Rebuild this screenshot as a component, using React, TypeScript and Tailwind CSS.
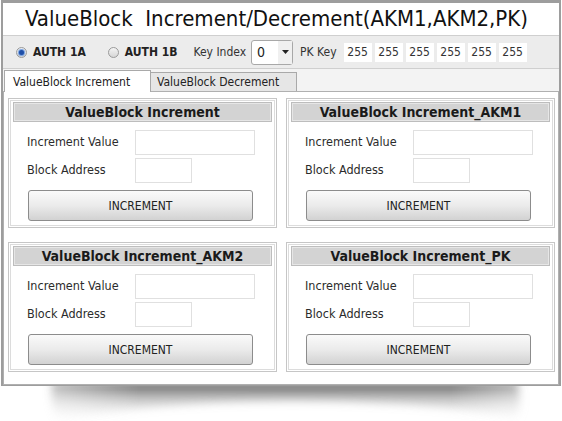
const font = "font-['DejaVu_Sans_Condensed','DejaVu_Sans',sans-serif]";

const Radio = ({ checked }: { checked?: boolean }) => (
  <span className="w-[11px] h-[11px] rounded-full border border-[#9a9a9a] bg-gradient-to-b from-[#f4f4f4] to-[#d6d6d6] flex items-center justify-center shrink-0">
    {checked && <span className="w-[5px] h-[5px] rounded-full bg-[#1f4fa8] shadow-[0_0_1px_1px_#6d9be0]" />}
  </span>
);

const GroupBox = ({ title }: { title: string }) => (
  <div className="w-[269px] h-[130px] border border-[#c6c6c6] shadow-[inset_0_0_0_1px_#fff,inset_0_0_0_2px_#dcdcdc] bg-white px-[4px] pt-[3px]">
    <div className="h-[20px] bg-[#d3d3d3] border border-[#bdbdbd] shadow-[inset_0_0_0_1px_#e6e6e6] flex items-center justify-center text-[14px] font-bold text-[#1a1a1a]">
      {title}
    </div>
    <div className="mt-[8px] flex items-center pl-[14px]">
      <span className="w-[108px] text-[12.5px] text-[#2b2b2b]">Increment Value</span>
      <div className="w-[120px] h-[25px] border border-[#e0e0e0] bg-white" />
    </div>
    <div className="mt-[3px] flex items-center pl-[14px]">
      <span className="w-[108px] text-[12.5px] text-[#2b2b2b]">Block Address</span>
      <div className="w-[57px] h-[25px] border border-[#e0e0e0] bg-white" />
    </div>
    <button className="mt-[7px] ml-[15px] w-[225px] h-[31px] rounded-[3px] border border-[#8c8c8c] bg-gradient-to-b from-[#fafafa] via-[#ebebeb] to-[#d2d2d2] text-[12px] text-[#222] flex items-center justify-center">
      INCREMENT
    </button>
  </div>
);

export default function App() {
  return (
    <div className={`w-[562px] h-[421px] bg-white overflow-hidden ${font}`}>
      <div className="ml-[1px] w-[560px] border-t-[3px] border-l-[2px] border-r-[2px] border-b border-[#9d9d9d]">
        {/* Title */}
        <div className="h-[32px] bg-white flex items-center pl-[22px] text-[22px] text-[#111] whitespace-pre leading-none">
          {"ValueBlock  Increment/Decrement(AKM1,AKM2,PK)"}
        </div>

        {/* Toolbar */}
        <div className="h-[33px] bg-[#ececec] border-t border-[#cfcfcf] flex items-center text-[12px] text-[#222]">
          <span className="ml-[13px]"><Radio checked /></span>
          <span className="ml-[6px] font-bold">AUTH 1A</span>
          <span className="ml-[22px]"><Radio /></span>
          <span className="ml-[6px] font-bold">AUTH 1B</span>
          <span className="ml-[16px] text-[#333]">Key Index</span>
          <div className="ml-[5px] w-[42px] h-[25px] bg-white border border-[#a8a8a8] rounded-[3px] flex items-center">
            <span className="pl-[5px] text-[14px] flex-1">0</span>
            <span className="w-[14px] h-full bg-[#f0f0f0] flex items-center justify-center">
              <svg width="7" height="4" viewBox="0 0 7 4"><path d="M0 0h7L3.5 4z" fill="#222" /></svg>
            </span>
          </div>
          <span className="ml-[7px] text-[#333]">PK Key</span>
          <div className="ml-[7px] flex gap-[3px]">
            {[0, 1, 2, 3, 4, 5].map((i) => (
              <div key={i} className="w-[28px] h-[19px] bg-white flex items-center justify-center text-[12px] text-[#333]">
                255
              </div>
            ))}
          </div>
        </div>

        {/* Tabs */}
        <div className="h-[23px] bg-[#f3f3f3] border-t border-[#cfcfcf] flex items-end text-[12px] text-[#222]">
          <div className="ml-[1px] w-[147px] h-[22px] bg-white border border-b-0 border-[#a9a9a9] pl-[8px] flex items-center relative top-[1px]">
            ValueBlock Increment
          </div>
          <div className="w-[146px] h-[19px] bg-[#e6e6e6] border border-l-0 border-b-0 border-[#a9a9a9] pl-[6px] flex items-center">
            ValueBlock Decrement
          </div>
        </div>

        {/* Panel */}
        <div className="border border-[#b0b0b0] bg-white pt-[6px] pl-[4px] pb-[12px]">
          <div className="grid grid-cols-[269px_269px] gap-x-[9px] gap-y-[14px]">
            <GroupBox title="ValueBlock Increment" />
            <GroupBox title="ValueBlock Increment_AKM1" />
            <GroupBox title="ValueBlock Increment_AKM2" />
            <GroupBox title="ValueBlock Increment_PK" />
          </div>
        </div>
      </div>

      {/* page shadow */}
      <svg width="562" height="36" viewBox="0 0 562 36" className="block">
        <defs>
          <linearGradient id="sh" x1="0" y1="0" x2="0" y2="1">
            <stop offset="0" stopColor="#333" stopOpacity="0.85" />
            <stop offset="0.45" stopColor="#888" stopOpacity="0.45" />
            <stop offset="1" stopColor="#ddd" stopOpacity="0" />
          </linearGradient>
          <linearGradient id="fade" x1="0" y1="0" x2="1" y2="0">
            <stop offset="0" stopColor="#fff" stopOpacity="0.2" />
            <stop offset="0.25" stopColor="#fff" stopOpacity="1" />
            <stop offset="0.8" stopColor="#fff" stopOpacity="1" />
            <stop offset="1" stopColor="#fff" stopOpacity="0.3" />
          </linearGradient>
          <mask id="mk">
            <rect x="0" y="0" width="562" height="36" fill="url(#fade)" />
          </mask>
          <filter id="bl" x="-10%" y="-50%" width="120%" height="200%">
            <feGaussianBlur stdDeviation="4" />
          </filter>
        </defs>
        <g mask="url(#mk)">
          <path
            d="M52 -4 L518 -4 C520 10 522 24 516 34 C470 22 400 16 300 15 C200 15 120 22 56 36 C52 25 50 12 52 -4 Z"
            fill="url(#sh)"
            filter="url(#bl)"
          />
        </g>
      </svg>
    </div>
  );
}
